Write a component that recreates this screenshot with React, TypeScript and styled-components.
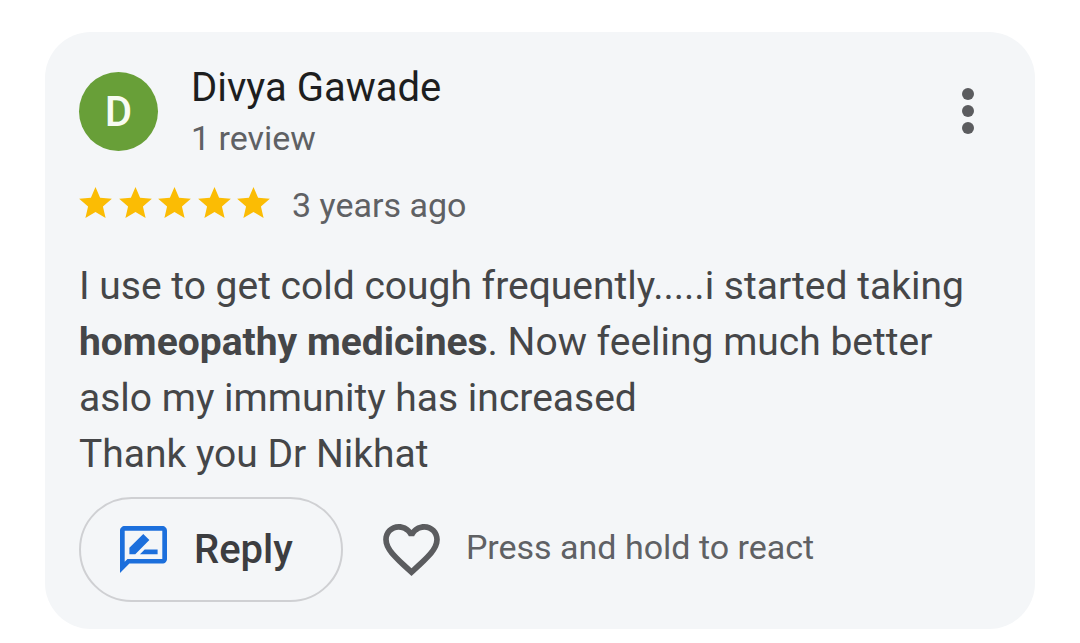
import React from "react";
import styled, { createGlobalStyle } from "styled-components";

const GlobalStyle = createGlobalStyle`
  *, *::before, *::after { box-sizing: border-box; }
  body { margin: 0; background: #ffffff; font-family: Roboto, "Liberation Sans", sans-serif; }
`;

const Page = styled.main`
  padding: 32px 45px 14px;
`;

const Card = styled.article`
  padding: 29px 34px 27px;
  border-radius: 46px;
  background: #f4f6f8;
`;

const Header = styled.header`
  display: flex;
  align-items: center;
`;

const Avatar = styled.div`
  display: flex;
  align-items: center;
  justify-content: center;
  width: 79px;
  height: 79px;
  border-radius: 50%;
  background: #689f38;
  color: #f7fbf2;
  font-size: 42px;
  font-weight: 500;
`;

const Author = styled.div`
  flex: 1;
  margin-left: 33px;
`;

const Name = styled.h2`
  margin: 0;
  color: #1d1e20;
  font-size: 40px;
  font-weight: 400;
  line-height: 54px;
`;

const Meta = styled.p`
  margin: 0;
  color: #5f6164;
  font-size: 34px;
  line-height: 46px;
`;

const IconButton = styled.button`
  display: flex;
  padding: 0;
  border: 0;
  background: none;
  color: #5b5c5f;
  cursor: pointer;
`;

const RatingRow = styled.div`
  display: flex;
  align-items: center;
  gap: 22px;
  margin-top: 21px;
`;

const Stars = styled.div`
  display: flex;
  justify-content: space-between;
  width: 191px;
`;

const Body = styled.p`
  margin: 30px 0 15px;
  color: #454648;
  font-size: 39px;
  line-height: 56px;
`;

const Actions = styled.footer`
  display: flex;
  align-items: center;
`;

const ReplyButton = styled.button`
  display: flex;
  align-items: center;
  gap: 27px;
  height: 105px;
  padding: 0 48px 0 39px;
  border: 2px solid #cfd0d3;
  border-radius: 53px;
  background: none;
  color: #3c3d40;
  font-family: inherit;
  font-size: 40px;
  font-weight: 500;
  cursor: pointer;
`;

const Reaction = styled.div`
  display: flex;
  align-items: flex-start;
  gap: 26px;
  margin-left: 40px;
`;

const Star = () => (
  <svg width="33" height="36" viewBox="2 2 20 22" fill="#fbbc04" aria-hidden="true">
    <path d="M12 17.27 18.18 21l-1.64-7.03L22 9.24l-7.19-.61L12 2 9.19 8.63 2 9.24l5.46 4.73L5.82 21z" />
  </svg>
);

const DotsIcon = () => (
  <svg width="66" height="46" viewBox="0 0 66 46" fill="currentColor" aria-hidden="true">
    <circle cx="33" cy="6" r="6" />
    <circle cx="33" cy="23" r="6" />
    <circle cx="33" cy="40" r="6" />
  </svg>
);

const ReviewIcon = () => (
  <svg width="47" height="47" viewBox="2 2 20 20" fill="#1c6fdc" aria-hidden="true">
    <path d="M20 2H4c-1.1 0-2 .9-2 2v18l4-4h14c1.1 0 2-.9 2-2V4c0-1.1-.9-2-2-2zm0 14H5.17L4 17.17V4h16v12z" />
    <path d="M6 14h2.5l6-6-2.6-2.6L6 11.3zM10.5 14H18v-2h-5.5z" />
  </svg>
);

const HeartIcon = () => (
  <svg width="57" height="52" viewBox="2 3 20 18.35" fill="currentColor" aria-hidden="true">
    <path d="M16.5 3c-1.74 0-3.41.81-4.5 2.09C10.91 3.81 9.24 3 7.5 3 4.42 3 2 5.42 2 8.5c0 3.78 3.4 6.86 8.55 11.54L12 21.35l1.45-1.32C18.6 15.36 22 12.28 22 8.5 22 5.42 19.58 3 16.5 3zm-4.4 15.55-.1.1-.1-.1C7.14 14.24 4 11.39 4 8.5 4 6.5 5.5 5 7.5 5c1.54 0 3.04.99 3.57 2.36h1.87C13.46 5.99 14.96 5 16.5 5c2 0 3.5 1.5 3.5 3.5 0 2.89-3.14 5.74-7.9 10.05z" />
  </svg>
);

export default function App() {
  return (
    <>
      <GlobalStyle />
      <Page>
        <Card>
          <Header>
            <Avatar>D</Avatar>
            <Author>
              <Name>Divya Gawade</Name>
              <Meta>1 review</Meta>
            </Author>
            <IconButton aria-label="More options">
              <DotsIcon />
            </IconButton>
          </Header>
          <RatingRow>
            <Stars role="img" aria-label="5 out of 5 stars">
              {[1, 2, 3, 4, 5].map((n) => (
                <Star key={n} />
              ))}
            </Stars>
            <Meta>3 years ago</Meta>
          </RatingRow>
          <Body>
            I use to get cold cough frequently.....i started taking <b>homeopathy medicines</b>. Now feeling much better
            aslo my immunity has increased
            <br />
            Thank you Dr Nikhat
          </Body>
          <Actions>
            <ReplyButton>
              <ReviewIcon />
              Reply
            </ReplyButton>
            <Reaction>
              <IconButton aria-label="React to review">
                <HeartIcon />
              </IconButton>
              <Meta>Press and hold to react</Meta>
            </Reaction>
          </Actions>
        </Card>
      </Page>
    </>
  );
}
